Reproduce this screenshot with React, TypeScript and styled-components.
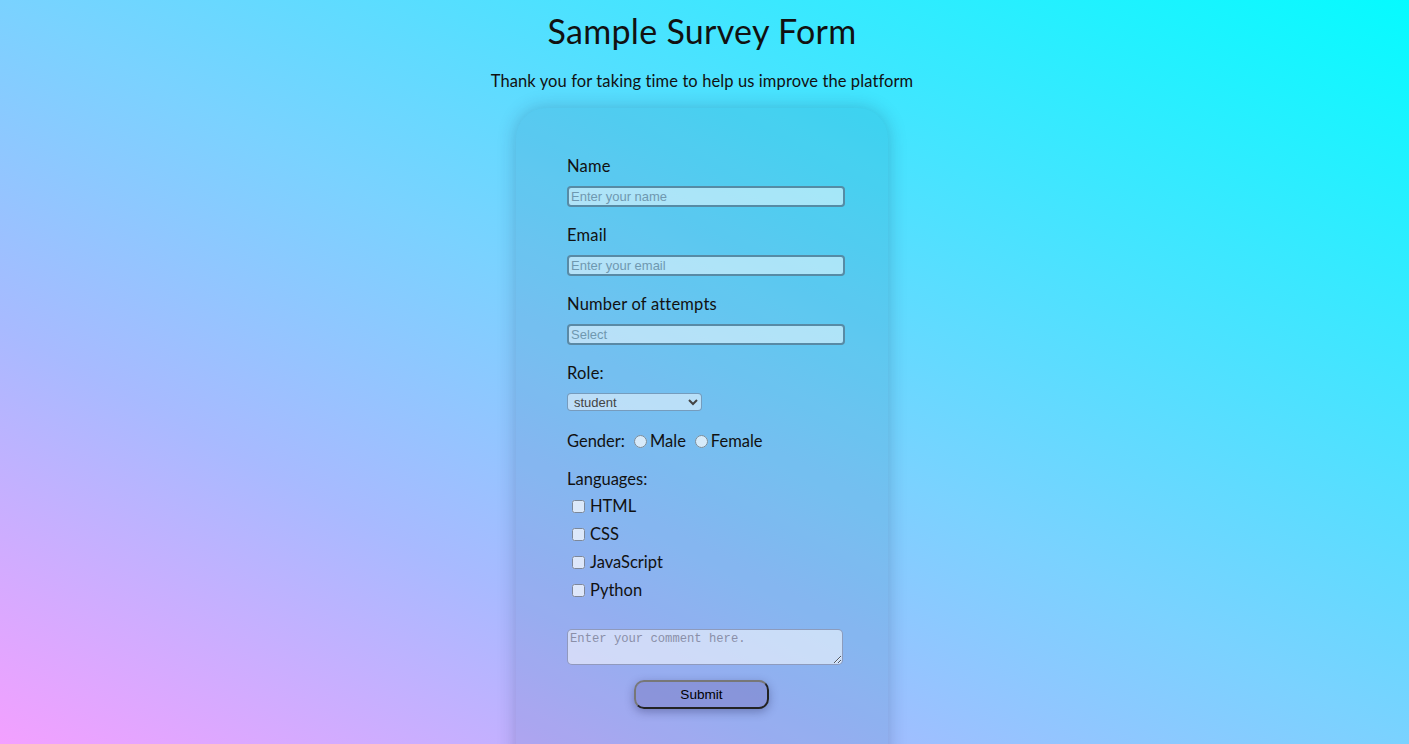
import React from "react";
import styled, { createGlobalStyle } from "styled-components";

const Global = createGlobalStyle`
  html { min-height: 100%; }
  body {
    margin: 0;
    min-height: 100vh;
    font-family: Lato, "Open Sans", sans-serif;
    background: linear-gradient(to top right, #f3a0ff 0%, #a8baff 28%, #7ad2ff 50%, #40e6ff 75%, #05fbff 100%);
    background-attachment: fixed;
    color: #111;
  }
`;

const Page = styled.div`
  display: flex;
  flex-direction: column;
  align-items: center;
  padding: 0 5px 40px 0;
`;

const Title = styled.h1`
  margin: 11px 0 0;
  font-size: 34px;
  font-weight: 400;
  letter-spacing: 0.3px;
  line-height: 40px;
`;

const Subtitle = styled.p`
  margin: 20px 0 0;
  font-size: 16.5px;
  line-height: 20px;
  letter-spacing: 0.1px;
`;

const Card = styled.form`
  margin-top: 17px;
  width: 372px;
  box-sizing: border-box;
  padding: 48px 44px 72px 51px;
  border-radius: 30px;
  background: rgba(10, 60, 110, 0.1);
  box-shadow: 0 0 18px rgba(20, 40, 80, 0.25);
  display: flex;
  flex-direction: column;
`;

const Field = styled.div`
  display: flex;
  flex-direction: column;
  margin-bottom: 18px;
`;

const Label = styled.label`
  font-size: 16.5px;
  line-height: 20px;
  margin-bottom: 10px;
  letter-spacing: 0.2px;
`;

const TextInput = styled.input`
  width: 278px;
  height: 21px;
  box-sizing: border-box;
  border: 2px solid rgba(40, 90, 120, 0.65);
  border-radius: 4px;
  background: rgba(255, 255, 255, 0.5);
  padding: 0 2px;
  font-family: "Liberation Sans", Arial, sans-serif;
  font-size: 13px;
  color: #222;
  &::placeholder { color: #6f98b0; }
  outline: none;
`;

const Select = styled.select`
  width: 135px;
  height: 18px;
  margin-bottom: 2px;
  box-sizing: border-box;
  border: 1px solid rgba(60, 100, 140, 0.55);
  border-radius: 4px;
  background: rgba(255, 255, 255, 0.5);
  font-family: "Liberation Sans", Arial, sans-serif;
  font-size: 13px;
  color: #444;
  padding: 0 2px;
`;

const Row = styled.div`
  display: flex;
  align-items: center;
  font-size: 16.5px;
  line-height: 20px;
  margin-bottom: 18px;
`;

const RowLabel = styled.span`
  margin-right: 9px;
`;

const Radio = styled.input`
  margin: 0 3px 0 0;
  width: 13px;
  height: 13px;
  opacity: 0.7;
`;

const OptionText = styled.span<{ $gap?: number }>`
  margin-right: ${(p) => p.$gap ?? 0}px;
`;

const Check = styled.div`
  display: flex;
  align-items: center;
  height: 28px;
  padding-left: 5px;
  font-size: 16.5px;
`;

const Box = styled.input`
  margin: 0 5px 0 0;
  width: 13px;
  height: 13px;
  opacity: 0.7;
`;

const LangLabel = styled.div`
  font-size: 16.5px;
  line-height: 20px;
  margin-bottom: 3px;
`;

const Comment = styled.textarea`
  margin-top: 25px;
  width: 276px;
  height: 36px;
  box-sizing: border-box;
  border: 1px solid rgba(80, 90, 130, 0.5);
  border-radius: 5px;
  background: rgba(255, 255, 255, 0.55);
  font-family: "Liberation Mono", monospace;
  font-size: 12.2px;
  padding: 2px 2px;
  &::placeholder { color: #8a8fa8; }
`;

const Submit = styled.button`
  align-self: flex-start;
  margin: 15px 0 0 67px;
  width: 135px;
  height: 29px;
  border-radius: 10px;
  border: 2px solid;
  border-color: #777 #222 #222 #777;
  background: rgba(120, 120, 190, 0.45);
  box-shadow: 0 3px 10px rgba(30, 30, 80, 0.35);
  font-family: "Liberation Sans", Arial, sans-serif;
  font-size: 13.6px;
  color: #000;
`;

export default function App() {
  return (
    <>
      <Global />
      <Page>
        <Title>Sample Survey Form</Title>
        <Subtitle>Thank you for taking time to help us improve the platform</Subtitle>
        <Card onSubmit={(e) => e.preventDefault()}>
          <Field>
            <Label>Name</Label>
            <TextInput placeholder="Enter your name" />
          </Field>
          <Field>
            <Label>Email</Label>
            <TextInput placeholder="Enter your email" />
          </Field>
          <Field>
            <Label>Number of attempts</Label>
            <TextInput placeholder="Select" />
          </Field>
          <Field>
            <Label>Role:</Label>
            <Select defaultValue="student">
              <option value="student">student</option>
              <option value="teacher">teacher</option>
            </Select>
          </Field>
          <Row>
            <RowLabel>Gender:</RowLabel>
            <Radio type="radio" name="g" />
            <OptionText $gap={9}>Male</OptionText>
            <Radio type="radio" name="g" />
            <OptionText>Female</OptionText>
          </Row>
          <LangLabel>Languages:</LangLabel>
          {["HTML", "CSS", "JavaScript", "Python"].map((l) => (
            <Check key={l}>
              <Box type="checkbox" />
              <span>{l}</span>
            </Check>
          ))}
          <Comment placeholder="Enter your comment here." />
          <Submit type="submit">Submit</Submit>
        </Card>
      </Page>
    </>
  );
}
